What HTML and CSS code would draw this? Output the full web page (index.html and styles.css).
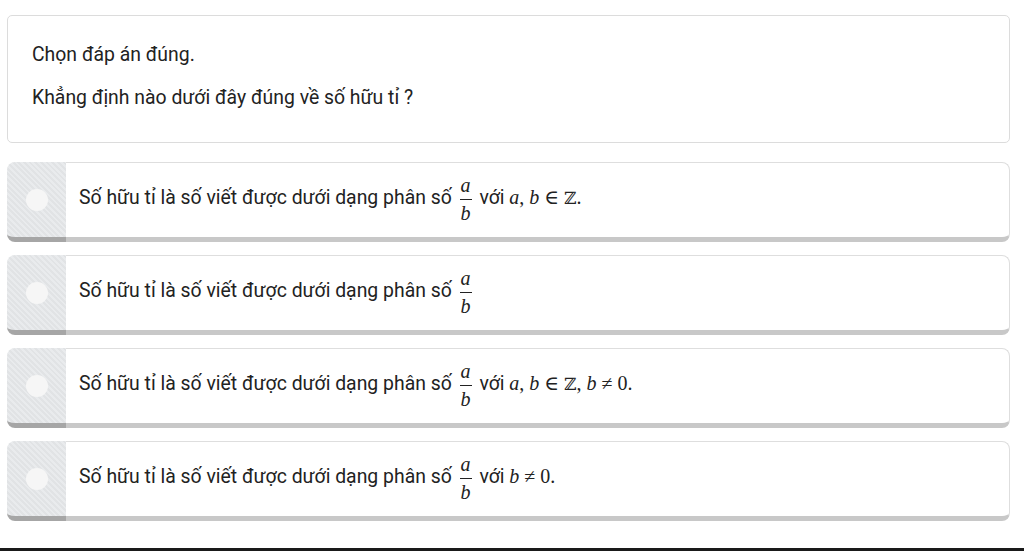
FILE: index.html
```html
<!DOCTYPE html>
<html lang="vi">
<head>
    <meta charset="UTF-8">
    <meta name="viewport" content="width=device-width, initial-scale=1.0">
    <title>Câu hỏi trắc nghiệm</title>
    <link rel="stylesheet" href="styles.css">
</head>
<body>

<div id="quiz">
    <div class="question">
        <p>Chọn đáp án đúng.</p>
        <p>Khẳng định nào dưới đây đúng về số hữu tỉ ?</p>
    </div>

    <div class="option">
        <div class="pick"><span class="dot"></span></div>
        <div class="answer">
            <span>Số hữu tỉ là số viết được dưới dạng phân số <span class="frac"><i>a</i><i>b</i></span> với <span class="math"><i>a</i>, <i>b</i> ∈ <span class="bb">ℤ</span>.</span></span>
        </div>
    </div>

    <div class="option">
        <div class="pick"><span class="dot"></span></div>
        <div class="answer">
            <span>Số hữu tỉ là số viết được dưới dạng phân số <span class="frac"><i>a</i><i>b</i></span></span>
        </div>
    </div>

    <div class="option">
        <div class="pick"><span class="dot"></span></div>
        <div class="answer">
            <span>Số hữu tỉ là số viết được dưới dạng phân số <span class="frac"><i>a</i><i>b</i></span> với <span class="math"><i>a</i>, <i>b</i> ∈ <span class="bb">ℤ</span>, <i>b</i> ≠ 0.</span></span>
        </div>
    </div>

    <div class="option">
        <div class="pick"><span class="dot"></span></div>
        <div class="answer">
            <span>Số hữu tỉ là số viết được dưới dạng phân số <span class="frac"><i>a</i><i>b</i></span> với <span class="math"><i>b</i> ≠ 0.</span></span>
        </div>
    </div>
</div>

<div class="edge"></div>

</body>
</html>
```

FILE: styles.css
```css
body {
    font-family: Roboto, "Liberation Sans", sans-serif;
    font-size: 19.4px;
    color: #222;
    background: #fff;
    margin: 0;
}

#quiz {
    padding: 15px 14px 0 7px;
    display: flex;
    flex-direction: column;
    gap: 13px;
}

.question {
    height: 128px;
    box-sizing: border-box;
    border: 1px solid #dcdcdc;
    border-radius: 5px;
    padding: 27px 24px 0 24px;
    margin-bottom: 6px;
}

.question p {
    margin: 0 0 19px 0;
    line-height: 24px;
}

.option {
    display: flex;
    height: 80px;
}

.pick {
    width: 59px;
    flex-shrink: 0;
    display: flex;
    align-items: center;
    justify-content: center;
    border-radius: 8px 0 0 8px;
    border-bottom: 5px solid #a6a6a6;
    background: repeating-linear-gradient(45deg, #e1e3e5 0, #e1e3e5 2px, #e9ebed 2px, #e9ebed 4px);
}

.dot {
    width: 22px;
    height: 22px;
    border-radius: 50%;
    background: #f6f6f6;
}

.answer {
    flex: 1;
    display: flex;
    align-items: center;
    padding: 0 0 3px 13px;
    border: 1px solid #dedede;
    border-left: none;
    border-bottom: 5px solid #c8c8c8;
    border-radius: 0 8px 8px 0;
}

.frac {
    display: inline-flex;
    flex-direction: column;
    align-items: center;
    vertical-align: middle;
    font-family: "Liberation Serif", "DejaVu Serif", serif;
    font-size: 20px;
    line-height: 26px;
    margin: 0 3px;
}

.frac i:first-child {
    border-bottom: 1px solid #222;
    padding: 0 1px 1px;
    text-align: center;
}

.math {
    font-family: "Liberation Serif", "DejaVu Serif", serif;
    font-size: 20px;
}

.bb {
    font-family: "DejaVu Serif", serif;
    font-size: 17px;
}

.edge {
    margin-top: 27px;
    height: 3px;
    background: #1a1a1a;
}
```
